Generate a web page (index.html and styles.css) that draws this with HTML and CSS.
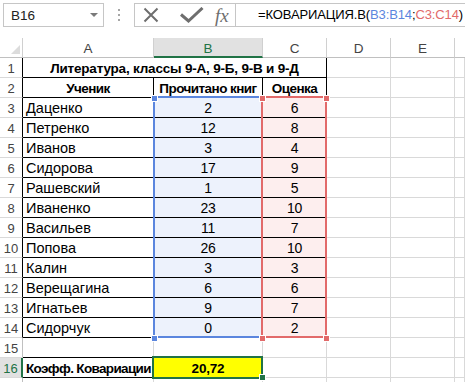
FILE: index.html
```html
<!DOCTYPE html>
<html lang="ru">
<head>
<meta charset="utf-8">
<link rel="stylesheet" href="styles.css">
</head>
<body>
<div class="fbar">
  <div class="namebox"><span>B16</span><i class="nb-arrow"></i></div>
  <div class="grip"><b></b><b></b><b></b></div>
  <div class="fbox">
    <div class="fbtns">
      <svg class="ico-x" width="16" height="16" viewBox="0 0 16 16"><path d="M1.5 1.5L14.5 14.5M14.5 1.5L1.5 14.5" stroke="#6e6e6e" stroke-width="2" fill="none"/></svg>
      <svg class="ico-ok" width="24" height="16" viewBox="0 0 24 16"><path d="M1 7.5L8.5 14L22.5 1" stroke="#6e6e6e" stroke-width="3" fill="none"/></svg>
      <span class="fx">fx</span>
    </div>
    <div class="formula">=КОВАРИАЦИЯ.В(<span class="ref-b">B3:B14</span>;<span class="ref-c">C3:C14</span>)</div>
  </div>
</div>

<div class="sheet">
  <div class="grid">
    <div class="hd corner"><i></i></div>
    <div class="hd">A</div>
    <div class="hd hd-sel">B</div>
    <div class="hd">C</div>
    <div class="hd">D</div>
    <div class="hd">E</div>
    <div class="hd hd-last"></div>

    <div class="rh tb">1</div>
    <div class="c tb title">Литература, классы 9-А, 9-Б, 9-В и 9-Д</div>
    <div class="c"></div><div class="c"></div><div class="c"></div>

    <div class="rh tb">2</div>
    <div class="c tb th">Ученик</div><div class="c tb th">Прочитано книг</div><div class="c tb th">Оценка</div>
    <div class="c"></div><div class="c"></div><div class="c"></div>

    <div class="rh tb">3</div>
    <div class="c tb">Даценко</div><div class="c tb num rb">2</div><div class="c tb num rc">6</div>
    <div class="c"></div><div class="c"></div><div class="c"></div>

    <div class="rh tb">4</div>
    <div class="c tb">Петренко</div><div class="c tb num rb">12</div><div class="c tb num rc">8</div>
    <div class="c"></div><div class="c"></div><div class="c"></div>

    <div class="rh tb">5</div>
    <div class="c tb">Иванов</div><div class="c tb num rb">3</div><div class="c tb num rc">4</div>
    <div class="c"></div><div class="c"></div><div class="c"></div>

    <div class="rh tb">6</div>
    <div class="c tb">Сидорова</div><div class="c tb num rb">17</div><div class="c tb num rc">9</div>
    <div class="c"></div><div class="c"></div><div class="c"></div>

    <div class="rh tb">7</div>
    <div class="c tb">Рашевский</div><div class="c tb num rb">1</div><div class="c tb num rc">5</div>
    <div class="c"></div><div class="c"></div><div class="c"></div>

    <div class="rh tb">8</div>
    <div class="c tb">Иваненко</div><div class="c tb num rb">23</div><div class="c tb num rc">10</div>
    <div class="c"></div><div class="c"></div><div class="c"></div>

    <div class="rh tb">9</div>
    <div class="c tb">Васильев</div><div class="c tb num rb">11</div><div class="c tb num rc">7</div>
    <div class="c"></div><div class="c"></div><div class="c"></div>

    <div class="rh tb">10</div>
    <div class="c tb">Попова</div><div class="c tb num rb">26</div><div class="c tb num rc">10</div>
    <div class="c"></div><div class="c"></div><div class="c"></div>

    <div class="rh tb">11</div>
    <div class="c tb">Калин</div><div class="c tb num rb">3</div><div class="c tb num rc">3</div>
    <div class="c"></div><div class="c"></div><div class="c"></div>

    <div class="rh tb">12</div>
    <div class="c tb">Верещагина</div><div class="c tb num rb">6</div><div class="c tb num rc">6</div>
    <div class="c"></div><div class="c"></div><div class="c"></div>

    <div class="rh tb">13</div>
    <div class="c tb">Игнатьев</div><div class="c tb num rb">9</div><div class="c tb num rc">7</div>
    <div class="c"></div><div class="c"></div><div class="c"></div>

    <div class="rh tb">14</div>
    <div class="c tb">Сидорчук</div><div class="c tb num rb">0</div><div class="c tb num rc">2</div>
    <div class="c"></div><div class="c"></div><div class="c"></div>

    <div class="rh">15</div>
    <div class="c bb"></div><div class="c bb"></div><div class="c"></div>
    <div class="c"></div><div class="c"></div><div class="c"></div>

    <div class="rh rh-sel">16</div>
    <div class="c tb th-left">Коэфф. Ковариации</div><div class="c tb num res">20,72</div><div class="c"></div>
    <div class="c"></div><div class="c"></div><div class="c"></div>

    <div class="rh"></div>
    <div class="c"></div><div class="c"></div><div class="c"></div>
    <div class="c"></div><div class="c"></div><div class="c"></div>
  </div>

  <div class="range range-b"></div>
  <div class="range range-c"></div>
  <i class="knob knob-b" style="left:151px;top:57px"></i>
  <i class="knob knob-b" style="left:151px;top:297px"></i>
  <i class="knob knob-c" style="left:259px;top:57px"></i>
  <i class="knob knob-c" style="left:323px;top:57px"></i>
  <i class="knob knob-c" style="left:259px;top:297px"></i>
  <i class="knob knob-c" style="left:323px;top:297px"></i>
  <div class="cursor"></div>
  <i class="knob knob-g"></i>
</div>
</body>
</html>
```

FILE: styles.css
```css
* {box-sizing: border-box;}
html, body {margin: 0; padding: 0; background: #fff; overflow: hidden;}
body {font-family: "Liberation Sans", Arial, sans-serif; font-size: 13px; color: #000; width: 465px; height: 382px;}

/* formula bar */
.fbar {height: 38px; display: flex; align-items: flex-start; padding-top: 3px;}
.fbar > * {flex-shrink: 0;}
.namebox {margin-left: 3px; width: 101px; height: 24px; border: 1px solid #c6c6c6; display: flex; align-items: center; padding-left: 7px; font-size: 13.5px; color: #222;}
.namebox span {flex: 1;}
.nb-arrow {width: 0; height: 0; border-left: 4px solid transparent; border-right: 4px solid transparent; border-top: 4px solid #7a7a7a; margin-right: 5px;}
.grip {width: 30px; height: 24px; display: flex; flex-direction: column; align-items: center; justify-content: center; gap: 3px;}
.grip b {width: 2px; height: 2px; background: #a6a6a6;}
.fbox {flex: 1 1 auto; min-width: 0; height: 24px; border: 1px solid #c6c6c6; border-right: 0; display: flex; overflow: hidden;}
.fbtns {flex: 0 0 101px; border-right: 1px solid #c6c6c6; display: flex; align-items: center; padding-left: 8px;}
.ico-x {margin-right: 21px;}
.ico-ok {margin-right: 11px;}
.fx {font-family: "Liberation Serif", serif; font-style: italic; font-size: 19px; color: #6e6e6e; line-height: 1;}
.formula {flex: 1; padding-left: 22px; font-size: 13px; line-height: 22px; white-space: nowrap; letter-spacing: -0.12px;}
.ref-b {color: #5b86de;}
.ref-c {color: #e26a6a;}

/* sheet */
.sheet {position: relative;}
.grid {display: grid; grid-template-columns: 23px 131px 109px 64px 64px 64px 10px; grid-auto-rows: 20px;}
.c, .hd, .rh {border-right: 1px solid #d9d9d9; border-bottom: 1px solid #d9d9d9; white-space: nowrap; overflow: hidden; line-height: 21px;}
.hd {border-right-color: #d0d0d0; border-bottom-color: #c0c0c0; text-align: center; color: #444; font-size: 13.5px;}
.hd-last {border-right: 0;}
.hd-sel {background: #e1e1e1; color: #217346; border-bottom: 2px solid #217346;}
.corner {position: relative;}
.corner i {position: absolute; right: 2px; bottom: 3px; width: 0; height: 0; border-left: 9px solid transparent; border-bottom: 9px solid #dcdcdc;}
.rh {text-align: center; color: #444; border-right-color: #c0c0c0; font-size: 13px;}
.rh.tb {border-right-color: #000;}
.rh-sel {background: #e1e1e1; color: #217346; border-right: 2px solid #217346;}
.c {padding-left: 3px; font-size: 14.5px; letter-spacing: 0;}
.c.tb {border-right-color: #000; border-bottom-color: #000;}
.c.bb {border-bottom-color: #000;}
.title {grid-column: span 3; font-size: 13.5px; font-weight: bold; text-align: center; padding-left: 0; letter-spacing: -0.2px;}
.th {font-size: 13.5px; font-weight: bold; text-align: center; padding: 0; letter-spacing: -0.55px;}
.th-left {font-size: 13.5px; font-weight: bold; letter-spacing: -0.65px;}
.num {text-align: center; padding: 0; font-size: 14px; letter-spacing: -0.3px;}
.rb {background: #edf2fc;}
.rc {background: #fdeeee;}
.res {background: #ffff00; font-size: 13.5px; font-weight: bold; letter-spacing: -0.2px;}

/* highlighted ranges */
.range {position: absolute; top: 58px; height: 242px; border: 2px solid;}
.range-b {left: 153px; width: 110px; border-color: #5b86de;}
.range-c {left: 261px; width: 66px; border-color: #e26a6a;}
.knob {position: absolute; width: 7px; height: 7px; border: 1px solid #fff;}
.knob-b {background: #5b86de;}
.knob-c {background: #e26a6a;}
.cursor {position: absolute; left: 152px; top: 318px; width: 111px; height: 23px; border: 2px solid #217346;}
.knob-g {left: 259px; top: 336px; background: #217346;}
```
